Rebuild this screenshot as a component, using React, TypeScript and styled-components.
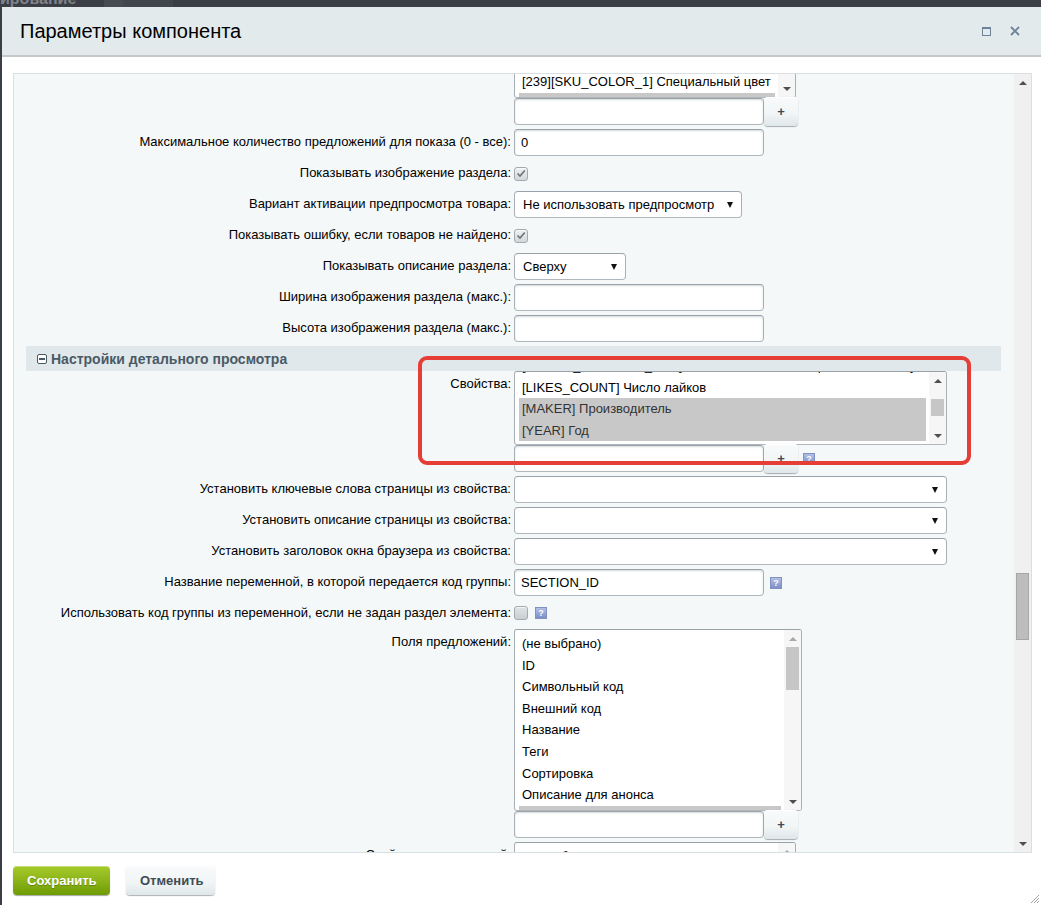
import styled, { createGlobalStyle } from "styled-components";

const GlobalStyle = createGlobalStyle`
  html, body {
    margin: 0;
    padding: 0;
  }
  body {
    background: #3b3e45;
    font-family: "Liberation Sans", Arial, sans-serif;
    font-size: 13px;
    color: #000;
    overflow: hidden;
  }
  * {
    box-sizing: border-box;
  }
`

const Page = styled.div`
  width: 1041px;
  height: 905px;
  display: flex;
  flex-direction: column;
  overflow: hidden;
`
const Backdrop = styled.div`
  height: 7px;
  flex: none;
  display: flex;
  align-items: flex-end;
  overflow: hidden;
`
const BackdropTitle = styled.span`
  font: bold 16px/16px "Liberation Sans", Arial, sans-serif;
  color: #7f8389;
  white-space: nowrap;
  margin-right: 28px;
`
const BackdropTab = styled.span<{ $w: number; $shade: string }>`
  width: ${p => p.$w}px;
  height: 7px;
  background: ${p => p.$shade};
`

const Dialog = styled.div`
  position: relative;
  flex: 1;
  margin-left: 2px;
  background: #fff;
  display: flex;
  flex-direction: column;
  overflow: hidden;
`
const Header = styled.div`
  height: 50px;
  flex: none;
  display: flex;
  align-items: center;
  padding: 0 21px 0 18px;
  background: #e2eaec;
  border-bottom: 2px solid #c4c8ca;
`
const Title = styled.h1`
  flex: 1;
  margin: 0;
  font: 20px/24px "Liberation Sans", Arial, sans-serif;
  color: #000;
`
const HeaderTools = styled.div`
  display: flex;
  align-items: center;
  gap: 19px;
`
const MaxIcon = styled.span`
  width: 9px;
  height: 9px;
  border: 1px solid #6f8398;
  border-top-width: 2px;
`

const Body = styled.div`
  flex: 1;
  display: flex;
  flex-direction: column;
  padding: 16px 9px 0 11px;
`
const ScrollBox = styled.div`
  height: 780px;
  flex: none;
  display: flex;
  border: 1px solid #d9e0e3;
`
const Viewport = styled.div`
  flex: 1;
  overflow: hidden;
  background: #f4f8f9;
`
const Form = styled.div`
  display: grid;
  grid-template-columns: 485px 487px;
  column-gap: 3px;
  row-gap: 4px;
  margin-top: -50px;
  padding: 0 13px 0 12px;
`
const Label = styled.div`
  text-align: right;
  padding-top: 5px;
  line-height: 16px;
  white-space: nowrap;
`
const Cell = styled.div<{ $gap?: number; $height?: number }>`
  position: relative;
  display: flex;
  align-items: center;
  gap: ${p => p.$gap ?? 0}px;
  ${p => p.$height && `height: ${p.$height}px;`}
`
const Stack = styled.div`
  position: relative;
  display: flex;
  flex-direction: column;
  align-items: flex-start;
`
const InlineRow = styled.div`
  display: flex;
  align-items: center;
`

const SectionHeader = styled.div`
  grid-column: 1 / -1;
  height: 25px;
  margin-bottom: -4px;
  display: flex;
  align-items: center;
  gap: 4px;
  padding-left: 11px;
  background: #e1e8eb;
  font: bold 14px "Liberation Sans", Arial, sans-serif;
  color: #4a5a65;
`
const CollapseIcon = styled.span`
  position: relative;
  width: 10px;
  height: 10px;
  border: 1px solid #4a5a65;
  border-radius: 2px;
  background: #fff;

  &::after {
    content: "";
    position: absolute;
    left: 1px;
    right: 1px;
    top: 3px;
    height: 2px;
    background: #4a5a65;
  }
`

const fieldBorder = `
  border: 1px solid;
  border-color: #9aa2a9 #a8b0b6 #b1b8bd #a8b0b6;
  border-radius: 4px;
  background: #fff;
`
const TextInput = styled.input<{ $w: number }>`
  width: ${p => p.$w}px;
  height: 27px;
  margin: 0;
  padding: 0 6px;
  ${fieldBorder}
  box-shadow: inset 0 1px 2px rgba(160, 168, 174, 0.45);
  font: 13px "Liberation Sans", Arial, sans-serif;
  color: #000;
  outline: none;
`
const SelectBox = styled.div<{ $w: number }>`
  width: ${p => p.$w}px;
  height: 27px;
  display: flex;
  align-items: center;
  padding: 0 8px;
  ${fieldBorder}
  white-space: nowrap;

  &::after {
    content: "";
    margin-left: auto;
    border-left: 3.5px solid transparent;
    border-right: 3.5px solid transparent;
    border-top: 6px solid #111;
  }
`
const PlusButton = styled.button`
  width: 34px;
  height: 29px;
  margin: -1px 0;
  padding: 0;
  border: none;
  border-radius: 4px;
  background: linear-gradient(to bottom, #f8fafb, #f2f6f7 55%, #dfe7ea);
  box-shadow: 0 0 1px rgba(0, 0, 0, 0.15), 0 1px 1px rgba(0, 0, 0, 0.3), inset 0 1px #fff;
  font: bold 13px "Liberation Sans", Arial, sans-serif;
  color: #3f4b54;
`
const Help = styled.span<{ $left?: number }>`
  width: 12px;
  height: 12px;
  margin-left: ${p => p.$left ?? 0}px;
  border: 1px solid #8092c4;
  background: linear-gradient(to bottom, #b2bfe6, #7d8fc6);
  color: #fff;
  font: bold 9px/10px "Liberation Sans", Arial, sans-serif;
  text-align: center;
`
const CheckBox = styled.span<{ $checked?: boolean }>`
  width: 14px;
  height: 14px;
  display: flex;
  align-items: center;
  justify-content: center;
  border: 1px solid #a3a9ad;
  border-radius: 3px;
  background: ${p => p.$checked
    ? "linear-gradient(to bottom, #eef0f1, #d3d8db)"
    : "linear-gradient(to bottom, #e1e4e6, #c9ced1)"};
  box-shadow: inset 0 1px rgba(255, 255, 255, 0.6);
`

const ListBox = styled.div<{ $w: number; $h: number }>`
  width: ${p => p.$w}px;
  height: ${p => p.$h}px;
  display: flex;
  ${fieldBorder}
  border-radius: 3px;
  overflow: hidden;
`
const Options = styled.div<{ $scroll: number }>`
  flex: 1;
  min-width: 0;
  align-self: flex-start;
  margin-top: ${p => -p.$scroll}px;
  padding: 3px 3px 0 4px;
`
const Option = styled.div<{ $selected?: boolean }>`
  height: 21.6px;
  line-height: 21.6px;
  padding-left: 3px;
  white-space: nowrap;
  overflow: hidden;
  background: ${p => p.$selected ? "#c8c8c8" : "transparent"};
  color: ${p => p.$selected ? "#333" : "#000"};
`

const Bar = styled.div<{ $bg: string }>`
  width: 17px;
  flex: none;
  display: flex;
  flex-direction: column;
  background: ${p => p.$bg};
`
const BarArrow = styled.div<{ $dir: "up" | "down"; $dim?: boolean }>`
  height: 17px;
  flex: none;
  display: flex;
  align-items: center;
  justify-content: center;

  &::after {
    content: "";
    border-left: 4px solid transparent;
    border-right: 4px solid transparent;
    ${p => p.$dir === "up" ? "border-bottom" : "border-top"}: 4px solid ${p => p.$dim ? "#a9a9a9" : "#4f4f4f"};
  }
`
const BarTrack = styled.div<{ $offset: number }>`
  flex: 1;
  min-height: 0;
  padding-top: ${p => p.$offset}px;
  overflow: hidden;
`
const Thumb = styled.div<{ $h: number; $border?: boolean }>`
  height: ${p => p.$h}px;
  margin: 0 2px;
  background: ${p => p.$border ? "#bdbdbd" : "#c6c6c6"};
  border: ${p => p.$border ? "1px solid #a6a6a6" : "none"};
`

const Annotation = styled.div`
  position: absolute;
  left: -96px;
  top: -15px;
  width: 553px;
  height: 109px;
  border: 4px solid #e53e36;
  border-radius: 9px;
  pointer-events: none;
`

const Footer = styled.div`
  display: flex;
  gap: 16px;
  padding-top: 13px;
`
const Button = styled.button<{ $primary?: boolean }>`
  height: 29px;
  padding: 0 14px;
  border: none;
  border-radius: 4px;
  font: bold 13px "Liberation Sans", Arial, sans-serif;
  ${p => p.$primary ? `
    width: 97px;
    color: #fff;
    background: linear-gradient(to bottom, #a6ca2b, #8cb41a 50%, #6e9b03);
    box-shadow: 0 1px 1px rgba(0, 0, 0, 0.35), inset 0 1px rgba(255, 255, 255, 0.35);
    text-shadow: 0 1px rgba(0, 0, 0, 0.25);
  ` : `
    width: 89px;
    color: #3f4b54;
    background: linear-gradient(to bottom, #f8fafb, #f1f5f6 55%, #dfe7ea);
    box-shadow: 0 0 1px rgba(0, 0, 0, 0.15), 0 1px 1px rgba(0, 0, 0, 0.3), inset 0 1px #fff;
  `}
`
const Grip = styled.svg`
  position: absolute;
  right: 1px;
  bottom: 1px;
`

interface ListProps {
  w: number;
  h: number;
  scroll?: number;
  items: string[];
  selected?: number[];
  thumbOffset: number;
  thumbHeight: number;
  upDim?: boolean;
}

function MultiSelect({ w, h, scroll = 0, items, selected = [], thumbOffset, thumbHeight, upDim }: ListProps) {
  return (
    <ListBox $w={w} $h={h}>
      <Options $scroll={scroll}>
        {items.map((item, i) => (
          <Option key={i} $selected={selected.includes(i)}>{item}</Option>
        ))}
      </Options>
      <Bar $bg="#f6f6f6">
        <BarArrow $dir="up" $dim={upDim} />
        <BarTrack $offset={thumbOffset}>
          <Thumb $h={thumbHeight} />
        </BarTrack>
        <BarArrow $dir="down" />
      </Bar>
    </ListBox>
  );
}

function AddRow({ help }: { help?: boolean }) {
  return (
    <InlineRow>
      <TextInput $w={250} readOnly />
      <PlusButton>+</PlusButton>
      {help && <Help $left={5}>?</Help>}
    </InlineRow>
  );
}

function Check({ checked }: { checked?: boolean }) {
  return (
    <CheckBox $checked={checked}>
      {checked && (
        <svg width="10" height="9" viewBox="0 0 10 9">
          <path d="M1.5 4.5 L4 7 L8.8 1.5" fill="none" stroke="#6d7275" strokeWidth="1.6" />
        </svg>
      )}
    </CheckBox>
  );
}

const skuItems = [
  "[237][SKU_SIZE] Размер",
  "[238][SKU_MATERIAL] Материал",
  "[239][SKU_COLOR_1] Специальный цвет",
  "[240][SKU_COLOR_2] Цвет",
];

const propItems = [
  "[FORUM_MESSAGE_CNT] Количество комментариев к элементу",
  "[LIKES_COUNT] Число лайков",
  "[MAKER] Производитель",
  "[YEAR] Год",
];

const offerFields = [
  "(не выбрано)",
  "ID",
  "Символьный код",
  "Внешний код",
  "Название",
  "Теги",
  "Сортировка",
  "Описание для анонса",
  "Картинка для анонса",
  "Детальное описание",
];

const offerProps = [
  "(не выбрано)",
  "[241][ARTNUMBER] Артикул",
  "[242][COLOR_REF] Цвет",
];

export default function App() {
  return (
    <>
      <GlobalStyle />
      <Page>
        <Backdrop>
          <BackdropTitle>ирование</BackdropTitle>
          <BackdropTab $w={19} $shade="#474a51" />
          <BackdropTab $w={50} $shade="#42454c" />
        </Backdrop>

        <Dialog>
          <Header>
            <Title>Параметры компонента</Title>
            <HeaderTools>
              <MaxIcon />
              <svg width="10" height="10" viewBox="0 0 10 10">
                <path d="M1 1 L9 9 M9 1 L1 9" stroke="#6f8398" strokeWidth="1.8" />
              </svg>
            </HeaderTools>
          </Header>

          <Body>
            <ScrollBox>
              <Viewport>
                <Form>
                  <Label />
                  <Stack>
                    <MultiSelect
                      w={282}
                      h={74}
                      items={skuItems}
                      selected={[3]}
                      thumbOffset={0}
                      thumbHeight={20}
                    />
                    <AddRow />
                  </Stack>

                  <Label>Максимальное количество предложений для показа (0 - все):</Label>
                  <Cell>
                    <TextInput $w={250} defaultValue="0" readOnly />
                  </Cell>

                  <Label>Показывать изображение раздела:</Label>
                  <Cell $height={27}>
                    <Check checked />
                  </Cell>

                  <Label>Вариант активации предпросмотра товара:</Label>
                  <Cell>
                    <SelectBox $w={228}>Не использовать предпросмотр</SelectBox>
                  </Cell>

                  <Label>Показывать ошибку, если товаров не найдено:</Label>
                  <Cell $height={27}>
                    <Check checked />
                  </Cell>

                  <Label>Показывать описание раздела:</Label>
                  <Cell>
                    <SelectBox $w={112}>Сверху</SelectBox>
                  </Cell>

                  <Label>Ширина изображения раздела (макс.):</Label>
                  <Cell>
                    <TextInput $w={250} readOnly />
                  </Cell>

                  <Label>Высота изображения раздела (макс.):</Label>
                  <Cell>
                    <TextInput $w={250} readOnly />
                  </Cell>

                  <SectionHeader>
                    <CollapseIcon />
                    Настройки детального просмотра
                  </SectionHeader>

                  <Label>Свойства:</Label>
                  <Stack>
                    <Annotation />
                    <MultiSelect
                      w={433}
                      h={74}
                      scroll={20}
                      items={propItems}
                      selected={[2, 3]}
                      thumbOffset={10}
                      thumbHeight={17}
                    />
                    <AddRow help />
                  </Stack>

                  <Label>Установить ключевые слова страницы из свойства:</Label>
                  <Cell>
                    <SelectBox $w={433} />
                  </Cell>

                  <Label>Установить описание страницы из свойства:</Label>
                  <Cell>
                    <SelectBox $w={433} />
                  </Cell>

                  <Label>Установить заголовок окна браузера из свойства:</Label>
                  <Cell>
                    <SelectBox $w={433} />
                  </Cell>

                  <Label>Название переменной, в которой передается код группы:</Label>
                  <Cell $gap={6}>
                    <TextInput $w={250} defaultValue="SECTION_ID" readOnly />
                    <Help>?</Help>
                  </Cell>

                  <Label>Использовать код группы из переменной, если не задан раздел элемента:</Label>
                  <Cell $height={25} $gap={7}>
                    <Check />
                    <Help>?</Help>
                  </Cell>

                  <Label>Поля предложений:</Label>
                  <Stack>
                    <MultiSelect
                      w={288}
                      h={182}
                      items={offerFields}
                      selected={[8]}
                      thumbOffset={0}
                      thumbHeight={43}
                      upDim
                    />
                    <AddRow />
                  </Stack>

                  <Label>Свойства предложений:</Label>
                  <Stack>
                    <MultiSelect
                      w={282}
                      h={120}
                      items={offerProps}
                      thumbOffset={0}
                      thumbHeight={40}
                      upDim
                    />
                  </Stack>
                </Form>
              </Viewport>

              <Bar $bg="#f0f0f0">
                <BarArrow $dir="up" />
                <BarTrack $offset={482}>
                  <Thumb $h={67} $border />
                </BarTrack>
                <BarArrow $dir="down" />
              </Bar>
            </ScrollBox>

            <Footer>
              <Button $primary>Сохранить</Button>
              <Button>Отменить</Button>
            </Footer>
          </Body>

          <Grip width="11" height="11" viewBox="0 0 11 11">
            <path d="M10 2 L2 10 M10 5 L5 10 M10 8 L8 10" stroke="#a0a4a8" strokeWidth="1" />
          </Grip>
        </Dialog>
      </Page>
    </>
  );
}
